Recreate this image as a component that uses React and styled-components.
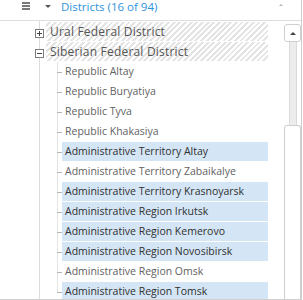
import React from 'react';
import styled, { createGlobalStyle } from 'styled-components';

const GlobalStyle = createGlobalStyle`
  html, body {
    margin: 0;
    padding: 0;
    background: #fff;
  }
  body {
    font-family: "Open Sans", "Noto Sans", "Liberation Sans", sans-serif;
  }
`;

const Panel = styled.div`
  width: 301px;
  height: 299px;
  border-right: 1px solid #cfcfcf;
  border-bottom: 1px solid #cfcfcf;
  display: flex;
  flex-direction: column;
  overflow: hidden;
`;

const Header = styled.div`
  height: 20px;
  flex: none;
  border-bottom: 1px solid #dedede;
  display: flex;
  align-items: flex-start;
  position: relative;
`;

const Burger = styled.div`
  margin: 2px 0 0 22px;
  width: 8px;
  height: 8px;
  background: linear-gradient(#7a7a7a 0 2px, transparent 2px 3px, #7a7a7a 3px 5px, transparent 5px 6px, #7a7a7a 6px 8px);
`;

const Caret = styled.div`
  margin: 5px 0 0 15px;
  width: 0;
  height: 0;
  border-left: 3px solid transparent;
  border-right: 3px solid transparent;
  border-top: 3px solid #555;
`;

const Title = styled.div`
  margin-left: 10px;
  font-size: 11.5px;
  line-height: 14px;
  color: #2f93dc;
`;

const CollapseArrow = styled.div`
  position: absolute;
  right: 18px;
  top: 4px;
  width: 0;
  height: 0;
  border-left: 2px solid transparent;
  border-right: 2px solid transparent;
  border-bottom: 2px solid #b5b5b5;
`;

const Body = styled.div`
  flex: 1;
  display: flex;
  min-height: 0;
`;

const Tree = styled.div`
  flex: 1;
  padding-top: 1px;
  padding-right: 16px;
  background: linear-gradient(#dcdcdc, #dcdcdc) no-repeat 39px 0 / 1px 100%;
  overflow: hidden;
`;

const Row = styled.div`
  height: 20px;
  display: flex;
  align-items: flex-start;
  font-size: 10.5px;
`;

const Expander = styled.div`
  margin: 7px 0 0 35px;
  width: 7px;
  height: 7px;
  border: 1px solid #7c7c7c;
  background: #fff;
  position: relative;
  flex: none;

  &::before {
    content: '';
    position: absolute;
    left: 1px;
    top: 3px;
    width: 5px;
    height: 1px;
    background: #444;
  }

  &::after {
    content: '';
    position: absolute;
    left: 3px;
    top: 1px;
    width: 1px;
    height: 5px;
    background: #444;
    display: ${(p) => (p.open ? 'none' : 'block')};
  }
`;

const Label = styled.div`
  flex: 1;
  height: 19px;
  line-height: 19px;
  white-space: nowrap;
  overflow: hidden;
  padding-left: ${(p) => (p.child ? 3 : 4)}px;
  color: ${(p) => (p.selected ? '#303030' : p.child ? '#626262' : '#555')};
  background: ${(p) =>
    p.hatched
      ? 'repeating-linear-gradient(135deg, #fff 0 2px, #e4e4e4 2px 4px)'
      : p.selected
      ? '#d4e6f5'
      : 'transparent'};
`;

const ParentLabel = styled(Label)`
  margin-left: 2px;
  font-size: 12px;
  letter-spacing: 0.2px;
`;

const Children = styled.div`
  margin-left: 57px;
  position: relative;

  &::before {
    content: '';
    position: absolute;
    left: 0;
    top: 0;
    bottom: 10px;
    width: 1px;
    background: #e4e4e4;
  }
`;

const ChildRow = styled(Row)`
  position: relative;

  &::before {
    content: '';
    position: absolute;
    left: 0;
    top: 10px;
    width: 5px;
    height: 1px;
    background: #b4b4b4;
  }

  & > div {
    margin-left: 5px;
  }
`;

const Scrollbar = styled.div`
  width: 17px;
  flex: none;
  display: flex;
  flex-direction: column;
  align-items: center;
  padding-top: 3px;
`;

const UpButton = styled.div`
  width: 15px;
  height: 16px;
  flex: none;
  border: 1px solid #cfcfcf;
  border-radius: 3px;
  background: #fff;
  display: flex;
  align-items: center;
  justify-content: center;

  &::before {
    content: '';
    border-left: 3px solid transparent;
    border-right: 3px solid transparent;
    border-bottom: 3px solid #444;
  }
`;

const Track = styled.div`
  width: 6px;
  height: 83px;
  flex: none;
  background: #ececec;
  border-left: 1px solid #dadada;
  border-right: 1px solid #dadada;
`;

const Thumb = styled.div`
  width: 15px;
  flex: 1;
  border: 1px solid #cfcfcf;
  border-bottom: none;
  border-radius: 3px 3px 0 0;
  background: #fff;
`;

const parents = [
  { name: 'Ural Federal District', open: false },
  { name: 'Siberian Federal District', open: true },
];

const regions = [
  { name: 'Republic Altay' },
  { name: 'Republic Buryatiya' },
  { name: 'Republic Tyva' },
  { name: 'Republic Khakasiya' },
  { name: 'Administrative Territory Altay', selected: true },
  { name: 'Administrative Territory Zabaikalye' },
  { name: 'Administrative Territory Krasnoyarsk', selected: true },
  { name: 'Administrative Region Irkutsk', selected: true },
  { name: 'Administrative Region Kemerovo', selected: true },
  { name: 'Administrative Region Novosibirsk', selected: true },
  { name: 'Administrative Region Omsk' },
  { name: 'Administrative Region Tomsk', selected: true },
];

const App = () => {
  return (
    <>
      <GlobalStyle />
      <Panel>
        <Header>
          <Burger />
          <Caret />
          <Title>Districts (16 of 94)</Title>
          <CollapseArrow />
        </Header>
        <Body>
          <Tree>
            {parents.map((p) => (
              <Row key={p.name}>
                <Expander open={p.open} />
                <ParentLabel hatched>{p.name}</ParentLabel>
              </Row>
            ))}
            <Children>
              {regions.map((r) => (
                <ChildRow key={r.name}>
                  <Label child selected={r.selected}>
                    {r.name}
                  </Label>
                </ChildRow>
              ))}
            </Children>
          </Tree>
          <Scrollbar>
            <UpButton />
            <Track />
            <Thumb />
          </Scrollbar>
        </Body>
      </Panel>
    </>
  );
};

export default App;
